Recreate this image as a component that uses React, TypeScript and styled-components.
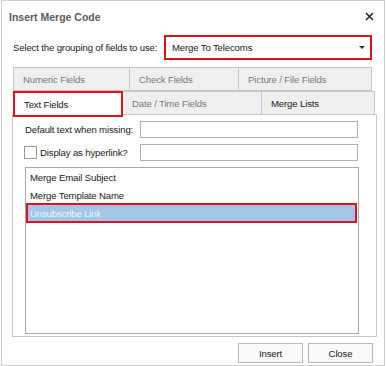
import React from "react";
import styled, { createGlobalStyle } from "styled-components";

const GlobalStyle = createGlobalStyle`
  body {
    margin: 0;
    background: #ffffff;
    font-family: "Liberation Sans", Arial, sans-serif;
  }
`;

const Dialog = styled.div`
  box-sizing: border-box;
  width: 384px;
  height: 366px;
  margin-left: 1px;
  border: 1px solid #cfcfcf;
  background: #ffffff;
  display: flex;
  flex-direction: column;
  font-size: 9.6px;
  letter-spacing: -0.15px;
  color: #222;
`;

const TitleBar = styled.div`
  height: 31px;
  display: flex;
  align-items: center;
  justify-content: space-between;
  padding: 0 10px 0 7px;
`;

const Title = styled.div`
  font-weight: bold;
  font-size: 10.5px;
  letter-spacing: 0;
  color: #5c5c5c;
`;

const CloseIcon = styled.svg`
  width: 9px;
  height: 9px;
`;

const GroupRow = styled.div`
  display: flex;
  align-items: center;
  height: 25px;
  margin-top: 3px;
  padding: 0 12px 0 11px;
`;

const Label = styled.span`
  white-space: nowrap;
`;

const Select = styled.div`
  box-sizing: border-box;
  margin-left: auto;
  width: 208px;
  height: 25px;
  border: 2px solid #e0121c;
  display: flex;
  align-items: center;
  justify-content: space-between;
  padding: 0 5px 0 6px;
`;

const Caret = styled.span`
  width: 0;
  height: 0;
  border-left: 3px solid transparent;
  border-right: 3px solid transparent;
  border-top: 3px solid #333;
`;

const TabArea = styled.div`
  margin-top: 7px;
  padding-left: 11px;
  display: flex;
  flex-direction: column;
`;

const TabRow = styled.div`
  display: flex;
  height: 24px;
`;

const Tab = styled.div<{ w: number; active?: boolean; strong?: boolean }>`
  box-sizing: border-box;
  width: ${(p) => p.w}px;
  height: ${(p) => (p.active ? 26 : 24)}px;
  margin-bottom: ${(p) => (p.active ? -2 : 0)}px;
  position: relative;
  z-index: ${(p) => (p.active ? 1 : 0)};
  display: flex;
  align-items: center;
  padding-left: 9px;
  background: ${(p) => (p.active ? "#ffffff" : "#efefef")};
  border: ${(p) => (p.active ? "2px solid #e0121c" : "1px solid #c6c6c6")};
  border-left-width: ${(p) => (p.active ? 2 : 0)}px;
  color: ${(p) => (p.active || p.strong ? "#222" : "#7a7a7a")};
  &:first-child {
    border-left-width: ${(p) => (p.active ? 2 : 1)}px;
  }
`;

const Panel = styled.div`
  box-sizing: border-box;
  width: 365px;
  height: 223px;
  margin-top: -1px;
  margin-left: 10px;
  border: 1px solid #c6c6c6;
  padding: 6px 17px 0 12px;
  display: flex;
  flex-direction: column;
`;

const FieldRow = styled.div`
  display: flex;
  align-items: center;
  height: 17px;
  margin-bottom: 6px;
`;

const FieldLabel = styled.span`
  width: 115px;
  display: flex;
  align-items: center;
  gap: 3px;
  white-space: nowrap;
`;

const CheckBox = styled.span`
  box-sizing: border-box;
  width: 13px;
  height: 13px;
  margin-left: -1px;
  border: 1px solid #9a9a9a;
  background: #fff;
`;

const TextInput = styled.div`
  box-sizing: border-box;
  width: 218px;
  height: 17px;
  border: 1px solid #b0b0b0;
  background: #fff;
`;

const ListBox = styled.div`
  box-sizing: border-box;
  width: 334px;
  height: 167px;
  border: 1px solid #a9a9a9;
  display: flex;
  flex-direction: column;
`;

const ListItem = styled.div<{ selected?: boolean }>`
  box-sizing: border-box;
  height: ${(p) => (p.selected ? 20 : 18)}px;
  margin-top: ${(p) => (p.selected ? -1 : 0)}px;
  display: flex;
  align-items: center;
  padding-left: ${(p) => (p.selected ? 2 : 4)}px;
  background: ${(p) => (p.selected ? "#a3c6e7" : "transparent")};
  border: ${(p) => (p.selected ? "2px solid #e0121c" : "none")};
  color: ${(p) => (p.selected ? "#eef4fb" : "#222")};
  margin-right: 1px;
`;

const Footer = styled.div`
  display: flex;
  justify-content: flex-end;
  gap: 5px;
  padding: 6px 11px 0 0;
`;

const Button = styled.div`
  box-sizing: border-box;
  width: 65px;
  height: 20px;
  border: 1px solid #b9b9b9;
  background: #f9f9f9;
  display: flex;
  align-items: center;
  justify-content: center;
`;

const topTabs = [
  { label: "Numeric Fields", w: 117 },
  { label: "Check Fields", w: 109 },
  { label: "Picture / File Fields", w: 133 },
];

const bottomTabs = [
  { label: "Text Fields", w: 110, active: true },
  { label: "Date / Time Fields", w: 139 },
  { label: "Merge Lists", w: 113, strong: true },
];

const items = ["Merge Email Subject", "Merge Template Name", "Unsubscribe Link"];

export default function App() {
  return (
    <>
      <GlobalStyle />
      <Dialog>
        <TitleBar>
          <Title>Insert Merge Code</Title>
          <CloseIcon viewBox="0 0 9 9">
            <path d="M1 1 L8 8 M8 1 L1 8" stroke="#222" strokeWidth="1.5" />
          </CloseIcon>
        </TitleBar>
        <GroupRow>
          <Label>Select the grouping of fields to use:</Label>
          <Select>
            <span>Merge To Telecoms</span>
            <Caret />
          </Select>
        </GroupRow>
        <TabArea>
          <TabRow>
            {topTabs.map((t) => (
              <Tab key={t.label} w={t.w}>
                {t.label}
              </Tab>
            ))}
          </TabRow>
          <TabRow>
            {bottomTabs.map((t) => (
              <Tab key={t.label} w={t.w} active={t.active} strong={t.strong}>
                {t.label}
              </Tab>
            ))}
          </TabRow>
        </TabArea>
        <Panel>
          <FieldRow>
            <FieldLabel>Default text when missing:</FieldLabel>
            <TextInput />
          </FieldRow>
          <FieldRow>
            <FieldLabel>
              <CheckBox />
              Display as hyperlink?
            </FieldLabel>
            <TextInput />
          </FieldRow>
          <ListBox>
            {items.map((item, i) => (
              <ListItem key={item} selected={i === 2}>
                {item}
              </ListItem>
            ))}
          </ListBox>
        </Panel>
        <Footer>
          <Button>Insert</Button>
          <Button>Close</Button>
        </Footer>
      </Dialog>
    </>
  );
}
